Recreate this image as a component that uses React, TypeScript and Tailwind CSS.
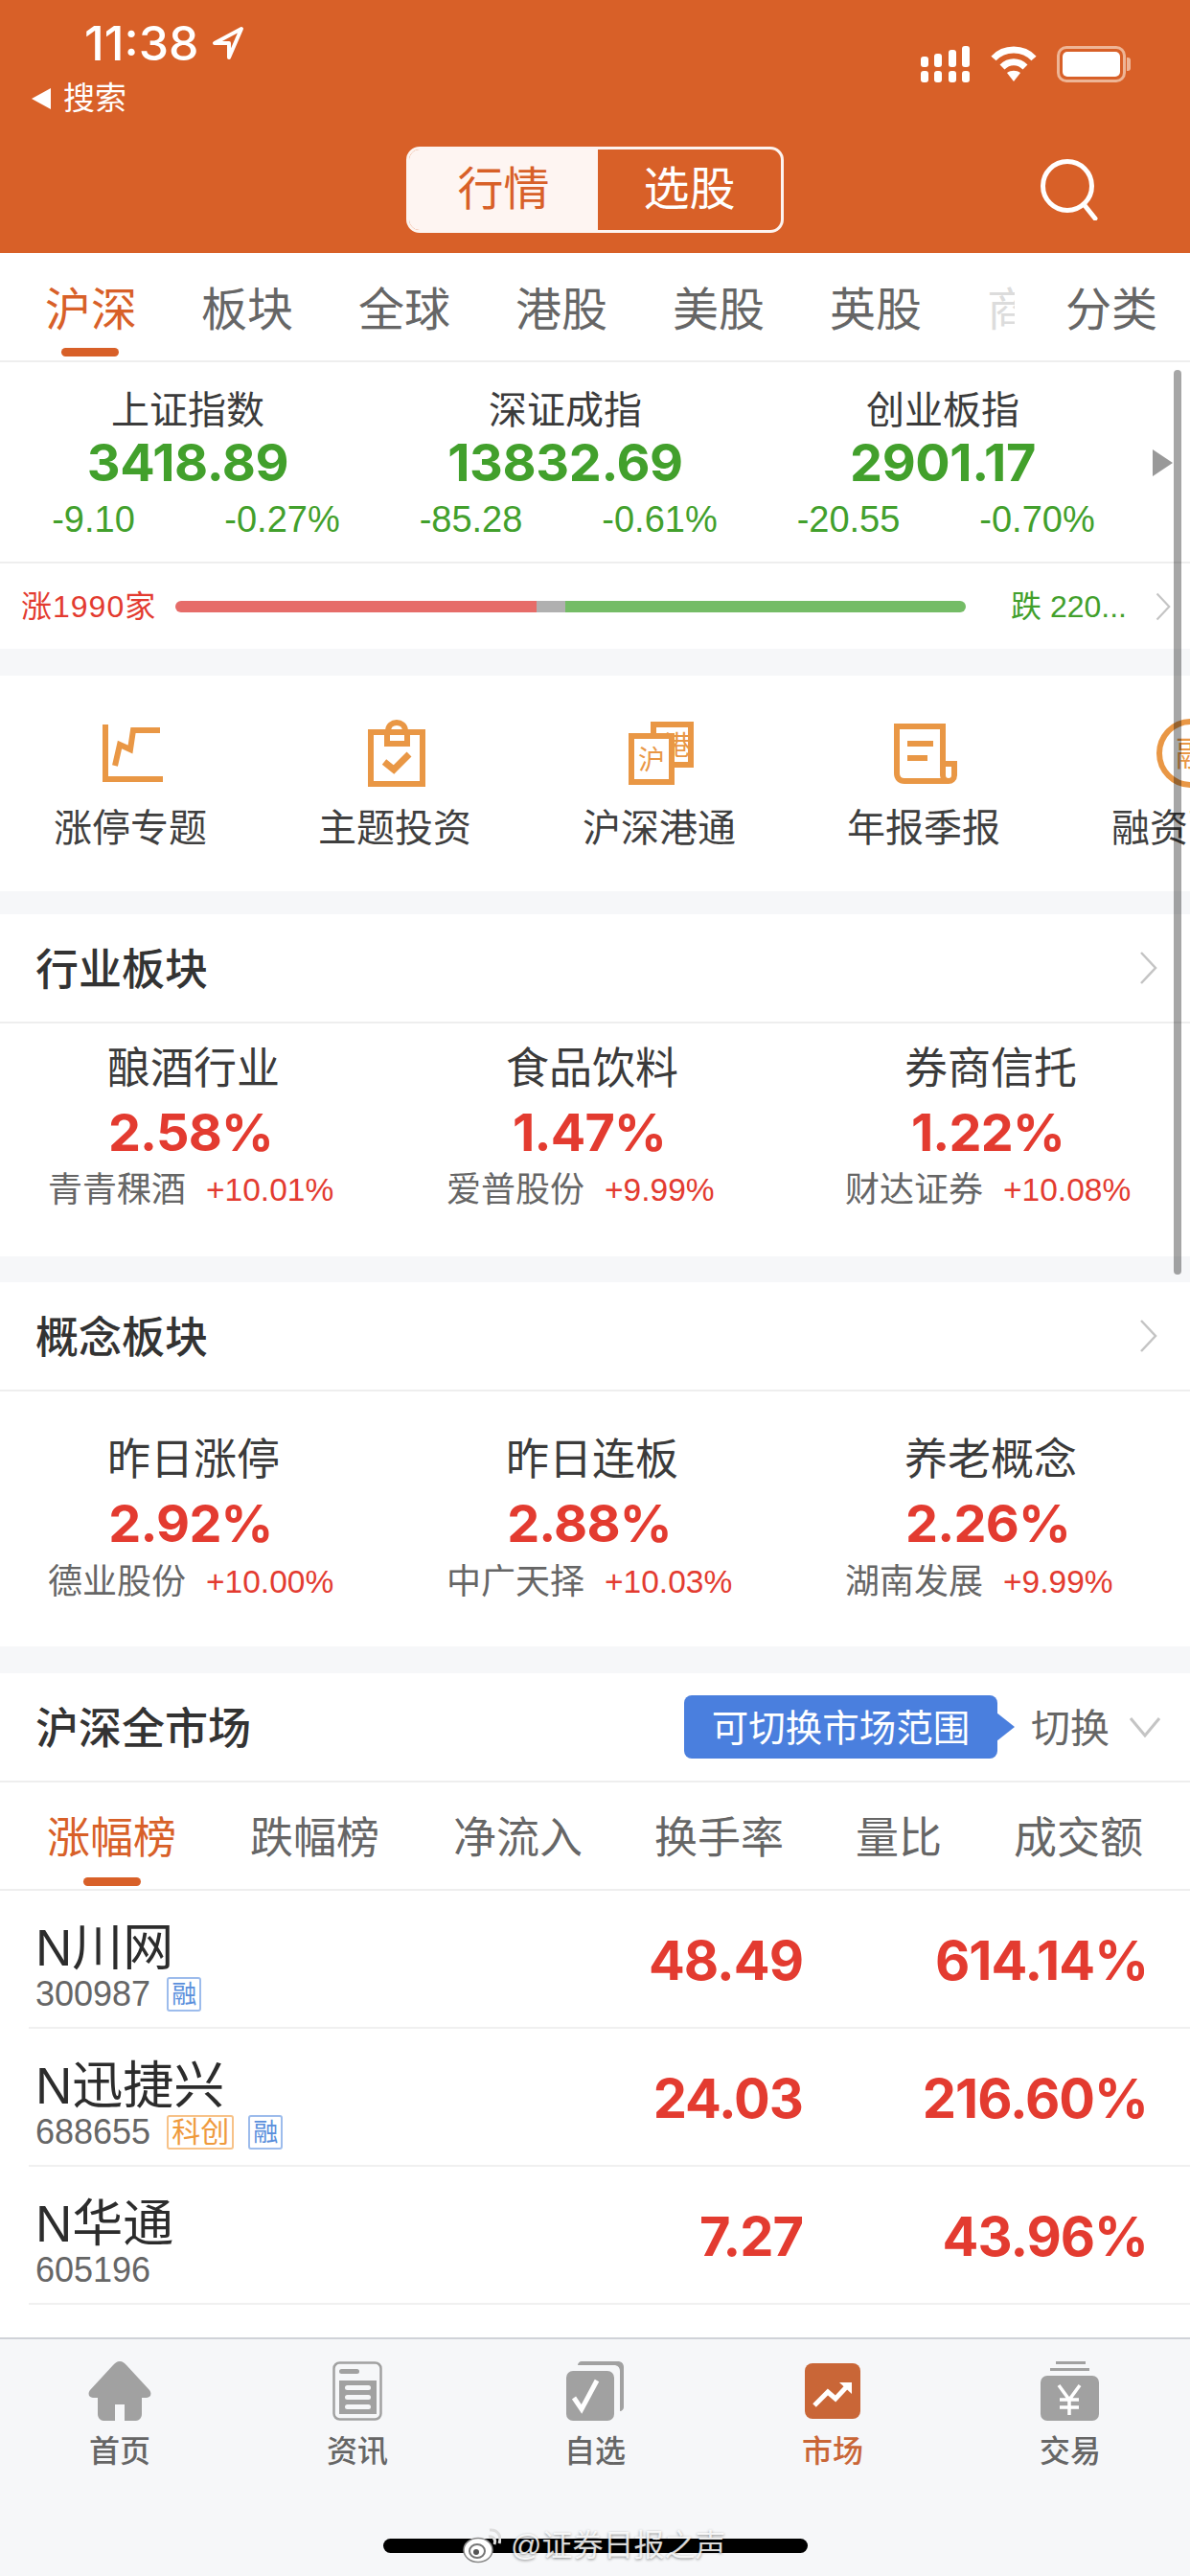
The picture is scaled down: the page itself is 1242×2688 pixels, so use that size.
import React from "react";

const O = "#E99745";
const CJK = "'Noto Sans CJK SC',sans-serif";

function ChartIcon() {
  return (
    <svg className="overflow-visible" width="70" height="70" viewBox="0 0 70 70" fill="none" stroke={O} strokeWidth="6">
      <path d="M9 2V59H69" />
      <path d="M19 45L24 23L35 28L38 8H66" />
    </svg>
  );
}
function ClipIcon() {
  return (
    <svg className="overflow-visible" width="70" height="70" viewBox="0 0 70 70" fill="none" stroke={O} strokeWidth="6">
      <rect x="10" y="10" width="54" height="54" />
      <rect x="27" y="10" width="21" height="12" />
      <path d="M28 9C28 -3 46 -3 46 9" />
      <path d="M24 41L34 49L50 33" strokeWidth="7" />
    </svg>
  );
}
function HuIcon() {
  return (
    <svg className="overflow-visible" width="74" height="70" viewBox="0 0 74 70" fill="none">
      <rect x="31" y="2" width="39" height="42" fill="#fff" stroke={O} strokeWidth="6" />
      <text x="42" y="34" fontSize="28" fill={O} fontFamily={CJK}>港</text>
      <rect x="8" y="14" width="42" height="48" fill="#fff" stroke={O} strokeWidth="6" />
      <text x="15" y="49" fontSize="28" fill={O} fontFamily={CJK}>沪</text>
    </svg>
  );
}
function DocIcon() {
  return (
    <svg className="overflow-visible" width="70" height="70" viewBox="0 0 70 70" fill="none" stroke={O} strokeWidth="6">
      <path d="M7 4H55V55C55 59 58 61 61 61H15C10 61 7 58 7 53Z" />
      <path d="M55 43H67V55C67 59 64 61 61 61" />
      <path d="M18 22H45M18 37H39" strokeWidth="6" />
    </svg>
  );
}
function RongIcon() {
  return (
    <svg className="overflow-visible" width="76" height="76" viewBox="0 0 76 76" fill="none">
      <circle cx="41" cy="35" r="33" stroke={O} strokeWidth="6" />
      <text x="25" y="49" fontSize="36" fill={O} fontFamily={CJK}>融</text>
    </svg>
  );
}

function Chevron({ c = "#c4c4c4" }: { c?: string }) {
  return (
    <svg width="20" height="36" viewBox="0 0 20 36" fill="none" stroke={c} strokeWidth="2.5">
      <path d="M3 2L18 18L3 34" />
    </svg>
  );
}

function Sector({ title, cols, pt, g1, g2, h }: { title: string; cols: string[][]; pt: string; g1: string; g2: string; h: string }) {
  return (
    <section className="bg-white">
      <div className="h-[114px] flex items-center justify-between pl-[37px] pr-[34px] border-b-2 border-[#eeeeee]">
        <span className="pt-[6px] text-[45px] font-medium text-[#333333]">{title}</span>
        <Chevron />
      </div>
      <div className={`grid grid-cols-[416px_416px_416px] -ml-[6px] ${pt} ${h}`}>
        {cols.map((c) => (
          <div key={c[0]} className="flex flex-col">
            <div className="text-center text-[45px] leading-[50px] text-[#3b3b3b]">{c[0]}</div>
            <div className={`text-center text-[54px] leading-[60px] tracking-[-0.8px] font-bold text-[#E33B30] pr-[6px] [font-family:Inter,sans-serif] ${g1}`}>{c[1]}</div>
            <div className={`pl-[56px] flex items-center h-[40px] whitespace-nowrap ${g2}`}>
              <span className="text-[36px] text-[#666666]">{c[2]}</span>
              <span className="text-[33.5px] text-[#E33B30] ml-[21px]">{c[3]}</span>
            </div>
          </div>
        ))}
      </div>
    </section>
  );
}

function Tag({ t, c }: { t: string; c: "b" | "o" }) {
  return (
    <span
      className={
        c === "b"
          ? "h-[36px] w-[36px] flex items-center justify-center border-2 rounded-[3px] border-[#9dbcec] text-[#5a8fdc] text-[26px] leading-none"
          : "h-[36px] w-[70px] flex items-center justify-center border-2 rounded-[3px] border-[#f7c288] text-[#ef9a3d] text-[30px] leading-none"
      }
    >
      {t}
    </span>
  );
}

function Row({ name, code, v, p, tags }: { name: string; code: string; v: string; p: string; tags: React.ReactNode }) {
  return (
    <div className="h-[144px] ml-[30px] pl-[7px] pr-[44px] border-b-2 border-[#f0f0f0] flex items-center">
      <div className="flex-1 flex flex-col pt-[17px]">
        <div className="text-[53px] leading-[56px] text-[#2c2c2c]">{name}</div>
        <div className="flex items-center h-[40px]">
          <span className="text-[36px] text-[#666666] mr-[17px]">{code}</span>
          <span className="flex gap-[15px]">{tags}</span>
        </div>
      </div>
      <div className="pt-[4px] text-[56px] tracking-[-1px] font-bold text-[#E33B30] text-right [font-family:Inter,sans-serif]">{v}</div>
      <div className="pt-[4px] text-[56px] tracking-[-1px] font-bold text-[#E33B30] text-right w-[360px] [font-family:Inter,sans-serif]">{p}</div>
    </div>
  );
}

function Nav({ label, active, icon }: { label: string; active?: boolean; icon: React.ReactNode }) {
  return (
    <div className="flex flex-col items-center">
      <div className="h-[64px] flex items-center justify-center">{icon}</div>
      <div className={`mt-[11px] text-[32px] leading-[40px] font-medium ${active ? "text-[#C96637]" : "text-[#666666]"}`}>{label}</div>
    </div>
  );
}

const G = "#a1a1a1";

export default function App() {
  const tabs = ["板块", "全球", "港股", "美股", "英股"];
  const idx = [
    ["上证指数", "3418.89", "-9.10", "-0.27%"],
    ["深证成指", "13832.69", "-85.28", "-0.61%"],
    ["创业板指", "2901.17", "-20.55", "-0.70%"],
  ];
  return (
    <div className="relative w-[1242px] h-[2688px] overflow-hidden flex flex-col bg-white [font-family:'Liberation_Sans','Noto_Sans_CJK_SC',sans-serif]">
      {/* header */}
      <header className="h-[264px] shrink-0 bg-[#D86028] text-white flex flex-col">
        <div className="h-[153px] flex justify-between">
          <div className="flex flex-col">
            <div className="flex items-center pl-[88px] pt-[20px] h-[70px]">
              <span className="text-[50px] leading-none font-medium [font-family:Inter,sans-serif]">11:38</span>
              <svg className="ml-[14px]" width="34" height="36" viewBox="0 0 34 36" fill="none" stroke="#fff" strokeWidth="4" strokeLinejoin="round">
                <path d="M31 3L3 18H18V33Z" />
              </svg>
            </div>
            <div className="flex items-center pl-[32px] mt-[13px]">
              <svg width="22" height="24" viewBox="0 0 22 24"><path d="M21 1V23L1 12Z" fill="#fff" /></svg>
              <span className="ml-[12px] text-[33px] leading-[40px]">搜索</span>
            </div>
          </div>
          <div className="flex items-start pt-[48px] pr-[62px] gap-[21px]">
            <svg width="52" height="38" viewBox="0 0 52 38" fill="#fff">
              <rect x="0" y="11" width="8" height="11" rx="3" />
              <rect x="14" y="8" width="8" height="14" rx="3" />
              <rect x="29" y="4" width="8" height="18" rx="3" />
              <rect x="43" y="0" width="8" height="22" rx="3" />
              <rect x="0" y="26" width="8" height="12" rx="3" />
              <rect x="14" y="26" width="8" height="12" rx="3" />
              <rect x="29" y="26" width="8" height="12" rx="3" />
              <rect x="43" y="26" width="8" height="12" rx="3" />
            </svg>
            <svg width="48" height="38" viewBox="0 0 48 38" fill="none" stroke="#fff" strokeWidth="7">
              <path d="M3 13C14 1 34 1 45 13" />
              <path d="M12 22C19 15 29 15 36 22" />
              <path d="M24 37L17 28C21 25 27 25 31 28Z" fill="#fff" stroke="none" />
            </svg>
            <div className="flex items-center">
              <div className="w-[72px] h-[38px] rounded-[10px] border-[3px] border-[#eeb596] p-[3px]">
                <div className="w-full h-full bg-white rounded-[5px]" />
              </div>
              <div className="w-[4px] h-[14px] ml-[1px] rounded-r-[3px] bg-[#eeb596]" />
            </div>
          </div>
        </div>
        <div className="grid grid-cols-[424px_394px_1fr] items-center">
          <div />
          <div className="h-[90px] rounded-[14px] border-[3px] border-[#fdf4f0] flex overflow-hidden">
            <div className="w-[197px] bg-[#FEF5F2] text-[#D86028] text-[48px] flex items-center justify-center">行情</div>
            <div className="flex-1 text-[48px] flex items-center justify-center">选股</div>
          </div>
          <div className="flex justify-end pr-[94px]">
            <svg width="62" height="64" viewBox="0 0 62 64" fill="none" stroke="#fff" strokeWidth="5">
              <circle cx="28" cy="28" r="25.5" />
              <path d="M45 47L57 62" strokeLinecap="round" />
            </svg>
          </div>
        </div>
      </header>

      <main className="flex-1 min-h-0 overflow-hidden">
        {/* tabs */}
        <div className="h-[114px] border-b-2 border-[#eeeeee] flex items-start relative">
          <div className="relative w-[187px] pl-[47px] pt-[32px] text-[48px] leading-[56px] text-[#D86028]">
            沪深
            <div className="absolute left-[64px] top-[99px] w-[60px] h-[9px] rounded-full bg-[#D86028]" />
          </div>
          {tabs.map((t) => (
            <div key={t} className="w-[164px] shrink-0 pl-[23px] pt-[32px] text-[48px] leading-[56px] text-[#666666]">{t}</div>
          ))}
          <div className="absolute left-[1030px] top-[32px] w-[29px] overflow-hidden text-[48px] leading-[56px] whitespace-nowrap text-[#dcdcdc]">商</div>
          <div className="absolute left-[1112px] top-[32px] text-[48px] leading-[56px] text-[#666666]">分类</div>
        </div>

        {/* indices */}
        <div className="h-[210px] border-b-2 border-[#eeeeee] flex pt-[28px] -ml-[1px]">
          {idx.map((c) => (
            <div key={c[0]} className="w-[394px] flex flex-col">
              <div className="text-center text-[40px] leading-[44px] text-[#3b3b3b]">{c[0]}</div>
              <div className="mt-[3px] text-center text-[54px] leading-[60px] tracking-[-0.4px] font-bold text-[#42A02C] [font-family:Inter,sans-serif]">{c[1]}</div>
              <div className="mt-[9px] grid grid-cols-2 text-center text-[38px] leading-[40px] text-[#42A02C]">
                <span>{c[2]}</span>
                <span>{c[3]}</span>
              </div>
            </div>
          ))}
          <svg className="mt-[63px] ml-[22px]" width="21" height="28" viewBox="0 0 21 28"><path d="M0 0L21 14L0 28Z" fill="#999" /></svg>
        </div>

        {/* breadth */}
        <div className="h-[89px] flex items-center pl-[22px] pr-[20px]">
          <span className="w-[161px] shrink-0 text-[32px] tracking-[1px] text-[#E33B30] whitespace-nowrap">涨1990家</span>
          <div className="w-[825px] h-[12px] rounded-full overflow-hidden flex shrink-0">
            <div className="w-[377px] bg-[#E66C69]" />
            <div className="w-[30px] bg-[#B0B0B0]" />
            <div className="flex-1 bg-[#74BC66]" />
          </div>
          <span className="ml-[47px] w-[150px] shrink-0 text-[32px] text-[#42A02C] whitespace-nowrap">跌 220...</span>
          <Chevron />
        </div>

        <div className="h-[28px] bg-[#F6F7F9]" />

        {/* shortcuts */}
        <div className="h-[225px] flex -ml-[2px] overflow-hidden">
          {[
            ["涨停专题", <ChartIcon />],
            ["主题投资", <ClipIcon />],
            ["沪深港通", <HuIcon />],
            ["年报季报", <DocIcon />],
            ["融资融券", <RongIcon />],
          ].map(([l, ic]) => (
            <div key={l as string} className="w-[276px] shrink-0 flex flex-col items-center pt-[46px]">
              <div className="h-[76px] flex items-center justify-center">{ic}</div>
              <div className="mt-[15px] text-[40px] leading-[44px] text-[#3f3f3f] whitespace-nowrap">{l}</div>
            </div>
          ))}
        </div>

        <div className="h-[24px] bg-[#F6F7F9]" />

        <Sector
          title="行业板块"
          pt="pt-[23px]"
          g1="mt-[11px]"
          g2="mt-[10px]"
          h="h-[243px]"
          cols={[
            ["酿酒行业", "2.58%", "青青稞酒", "+10.01%"],
            ["食品饮料", "1.47%", "爱普股份", "+9.99%"],
            ["券商信托", "1.22%", "财达证券", "+10.08%"],
          ]}
        />
        <div className="h-[27px] bg-[#F6F7F9]" />
        <Sector
          title="概念板块"
          pt="pt-[47px]"
          g1="mt-[11px]"
          g2="mt-[11px]"
          h="h-[266px]"
          cols={[
            ["昨日涨停", "2.92%", "德业股份", "+10.00%"],
            ["昨日连板", "2.88%", "中广天择", "+10.03%"],
            ["养老概念", "2.26%", "湖南发展", "+9.99%"],
          ]}
        />
        <div className="h-[28px] bg-[#F6F7F9]" />

        {/* market */}
        <div className="h-[114px] border-b-2 border-[#eeeeee] flex items-center pl-[37px]">
          <span className="pt-[6px] text-[45px] font-medium text-[#333333]">沪深全市场</span>
          <div className="relative ml-[452px] w-[327px] h-[66px] rounded-[8px] bg-[#4A7FDE] text-white text-[38.5px] pt-[4px] flex items-center justify-center whitespace-nowrap">
            可切换市场范围
            <svg className="absolute left-[326px] top-[18px]" width="20" height="30" viewBox="0 0 20 30"><path d="M0 0L19 15L0 30Z" fill="#4A7FDE" /></svg>
          </div>
          <span className="ml-[35px] pt-[6px] text-[41px] text-[#666666]">切换</span>
          <svg className="ml-[20px]" width="34" height="22" viewBox="0 0 34 22" fill="none" stroke="#c4c4c4" strokeWidth="3"><path d="M2 2L17 20L32 2" /></svg>
        </div>
        <div className="h-[113px] border-b-2 border-[#eeeeee] relative flex items-start pt-[31px]">
          {[
            ["涨幅榜", "ml-[49px] text-[#D86028]"],
            ["跌幅榜", "ml-[77px] text-[#666666]"],
            ["净流入", "ml-[77px] text-[#666666]"],
            ["换手率", "ml-[75px] text-[#666666]"],
            ["量比", "ml-[75px] text-[#666666]"],
            ["成交额", "ml-[75px] text-[#666666]"],
          ].map(([t, c]) => (
            <span key={t} className={`text-[45px] leading-[56px] whitespace-nowrap ${c}`}>
              {t}
            </span>
          ))}
          <div className="absolute left-[87px] top-[99px] w-[60px] h-[9px] rounded-full bg-[#D86028]" />
        </div>
        <Row name="N川网" code="300987" v="48.49" p="614.14%" tags={<Tag t="融" c="b" />} />
        <Row
          name="N迅捷兴"
          code="688655"
          v="24.03"
          p="216.60%"
          tags={
            <>
              <Tag t="科创" c="o" />
              <Tag t="融" c="b" />
            </>
          }
        />
        <Row name="N华通" code="605196" v="7.27" p="43.96%" tags={null} />
      </main>

      {/* bottom nav */}
      <nav className="h-[249px] shrink-0 bg-[#F6F7F9] border-t-2 border-[#D0D2D8] grid grid-cols-5 pt-[22px] px-[1px]">
        <Nav
          label="首页"
          icon={
            <svg width="66" height="62" viewBox="0 0 66 62" fill={G}>
              <path d="M33 0C36 0 38 2 40 4L64 30C67 34 65 38 61 38H56V55C56 59 53 62 50 62H38V45H28V62H16C13 62 10 59 10 55V38H5C1 38 -1 34 2 30L26 4C28 2 30 0 33 0Z" />
            </svg>
          }
        />
        <Nav
          label="资讯"
          icon={
            <svg width="52" height="62" viewBox="0 0 52 62" fill="none">
              <rect x="1.5" y="1.5" width="49" height="59" rx="6" stroke={G} strokeWidth="2.5" />
              <rect x="7" y="8" width="21" height="5" rx="2.5" fill={G} />
              <rect x="7" y="20" width="39" height="35" fill={G} />
              <rect x="13" y="25" width="27" height="5" rx="2.5" fill="#F6F7F9" />
              <rect x="13" y="35" width="27" height="5" rx="2.5" fill="#F6F7F9" />
              <rect x="13" y="45" width="27" height="5" rx="2.5" fill="#F6F7F9" />
            </svg>
          }
        />
        <Nav
          label="自选"
          icon={
            <svg width="60" height="62" viewBox="0 0 60 62" fill="none">
              <path d="M12 4C12 2 14 0 16 0H54C57 0 60 2 60 6V48C60 50 58 52 56 52V10C56 6 53 4 50 4Z" fill={G} />
              <rect x="0" y="10" width="50" height="52" rx="7" fill={G} />
              <path d="M8 38L16 50L32 20" stroke="#fff" strokeWidth="5" />
            </svg>
          }
        />
        <Nav
          label="市场"
          active
          icon={
            <svg width="58" height="58" viewBox="0 0 58 58">
              <rect width="58" height="58" rx="8" fill="#C96637" />
              <path d="M10 44L24 30L32 37L46 22" stroke="#fff" strokeWidth="5" fill="none" />
              <path d="M36 20H49V32Z" fill="#fff" />
            </svg>
          }
        />
        <Nav
          label="交易"
          icon={
            <svg width="62" height="62" viewBox="0 0 62 62" fill="none">
              <rect x="16" y="0" width="31" height="3" fill={G} />
              <rect x="10" y="7" width="41" height="3" fill={G} />
              <rect x="0" y="15" width="61" height="47" rx="7" fill={G} />
              <path d="M19 25L30 40L41 25M30 40V56M20 40H40M20 48H40" stroke="#fff" strokeWidth="3.5" />
            </svg>
          }
        />
      </nav>

      {/* overlays */}
      <div className="absolute left-[1225px] top-[386px] w-[8px] h-[944px] rounded-full bg-[#00000059]" />
      <div className="absolute left-[400px] top-[2649px] w-[443px] h-[15px] rounded-full bg-black" />
      <div className="absolute left-[483px] top-[2636px] flex items-center text-white/85 text-[32px] leading-[40px] [text-shadow:0_1px_3px_rgba(0,0,0,0.45)]">
        <svg width="40" height="38" viewBox="0 0 40 38" fill="none">
          <ellipse cx="16" cy="24" rx="15" ry="12.5" fill="#fff" stroke="#8a8a8a" strokeWidth="1.5" />
          <ellipse cx="15" cy="25" rx="8" ry="7" fill="none" stroke="#777" strokeWidth="2" />
          <circle cx="14" cy="26" r="3" fill="#555" />
          <path d="M27 10C32 9 35 13 33 18" stroke="#ddd" strokeWidth="3" />
          <path d="M28 3C36 2 41 9 38 17" stroke="#ddd" strokeWidth="3" />
        </svg>
        <span className="ml-[10px] whitespace-nowrap">@证券日报之声</span>
      </div>
    </div>
  );
}
